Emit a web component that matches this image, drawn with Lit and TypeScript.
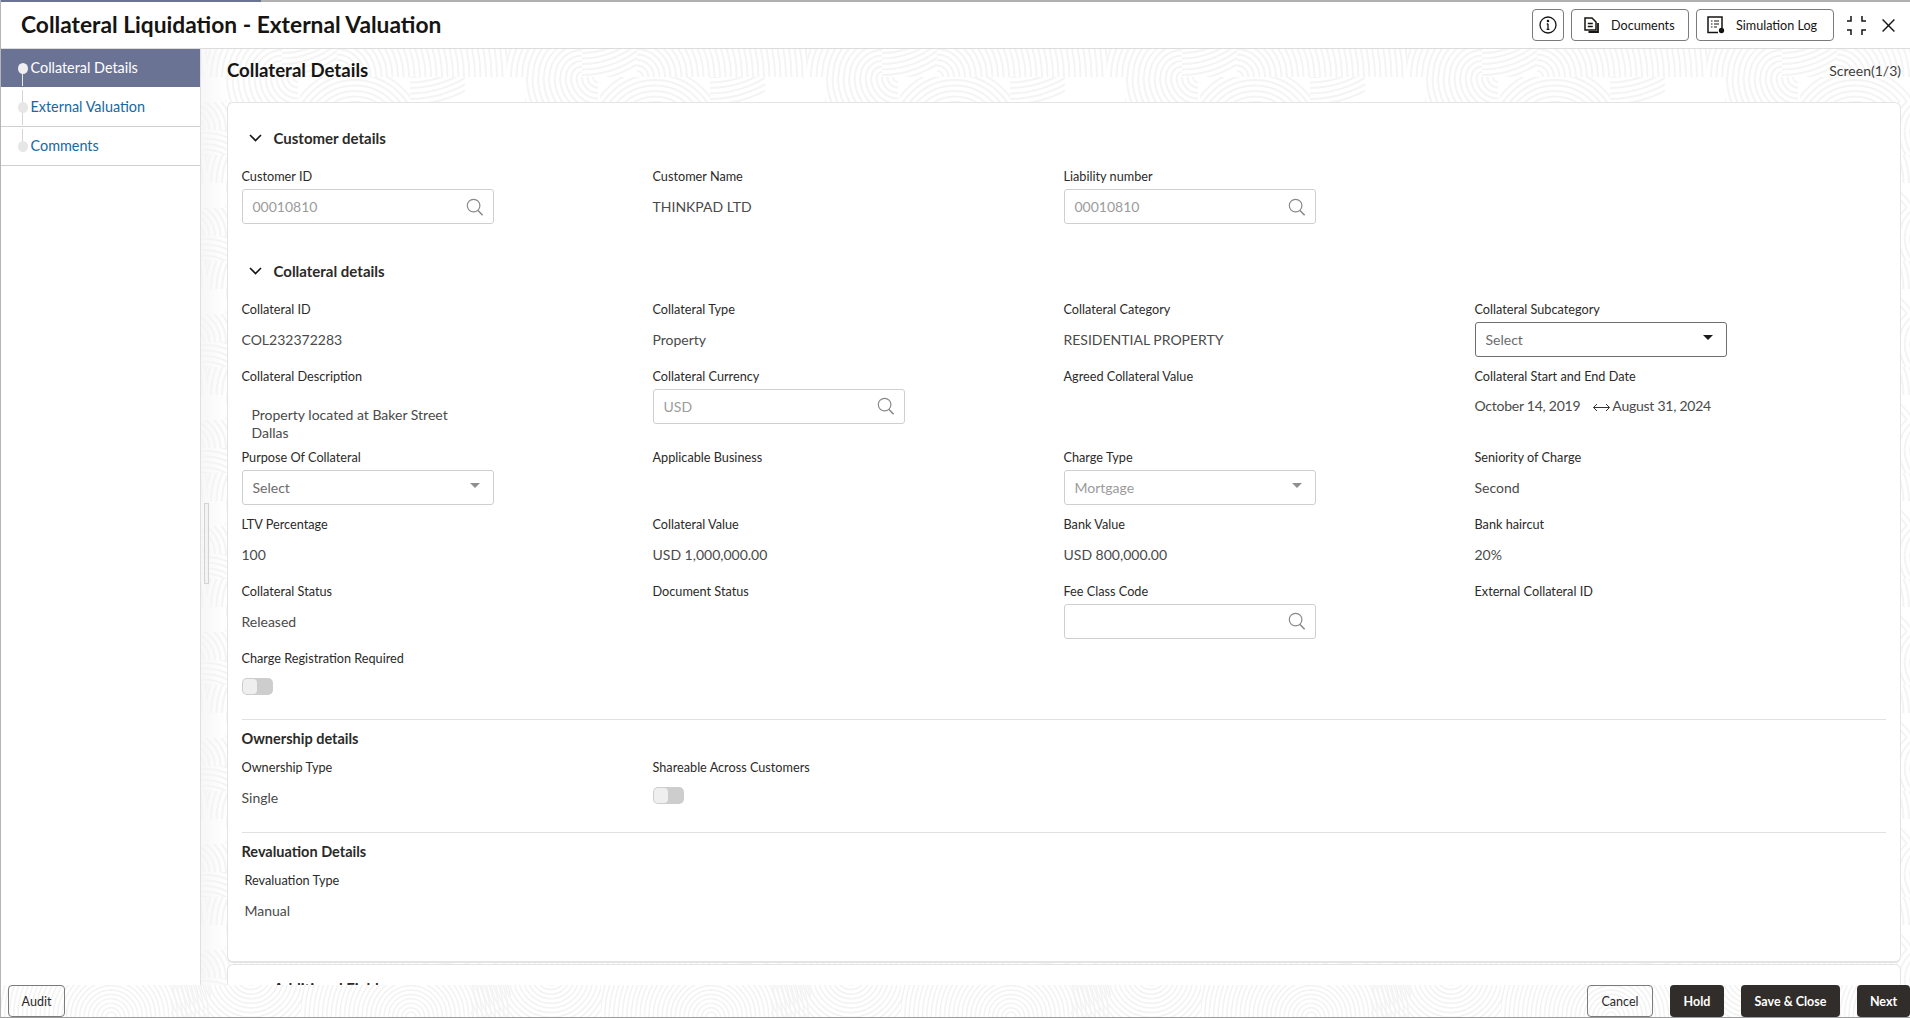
import { LitElement, html, css, svg } from "lit";
import { customElement } from "lit/decorators.js";

// x, y, w, h of the cell, then ring centre in tile coordinates, smallest and largest radius
type Cell = [number, number, number, number, number, number, number, number];

const rows: Cell[] = [
  [0, 0, 55, 28, 0, -70, 74, 104],
  [55, 0, 170, 28, 55, 28, 6, 172],
  [225, 0, 75, 28, 300, 28, 5, 80],
  [243, 28, 57, 25, 316, 28, 5, 80],
  [0, 28, 16, 25, 16, 28, 5, 30],
  [18, 28, 55, 25, 73, 88, 35, 70],
  [73, 28, 55, 25, 73, 88, 35, 70],
  [128, 28, 55, 25, 128, -60, 88, 120],
];

function cellSvg(c: Cell, dx = 0, dy = 0, step = 5.5) {
  const rs: number[] = [];
  for (let r = c[6]; r <= c[7]; r += step) rs.push(r);
  return svg`<svg x=${c[0] + dx} y=${c[1] + dy} width=${c[2]} height=${c[3]}>${rs.map(
    (r) => svg`<circle cx=${c[4] - c[0]} cy=${c[5] - c[1]} r=${r} />`
  )}</svg>`;
}

const mainTile = svg`
  ${rows.map((c) => cellSvg(c))}
  ${rows.map((c) => cellSvg(c, 150, 53))}
  ${rows.map((c) => cellSvg(c, -150, 53))}
`;

const footTile = svg`
  <svg x="0" y="0" width="210" height="32">
    ${Array.from({ length: 26 }, (_, i) => svg`<circle cx="110" cy="32" r=${5 + i * 4.4} />`)}
  </svg>
  <svg x="170" y="0" width="130" height="32">
    ${Array.from({ length: 24 }, (_, i) => svg`<circle cx="80" cy="-10" r=${10 + i * 4.6} />`)}
  </svg>
`;

const searchIcon = html`<svg class="ico" viewBox="0 0 18 18" width="18" height="18" fill="none" stroke="#8a8886" stroke-width="1.2">
  <circle cx="7.6" cy="7.6" r="6.3" /><path d="M12 12.4 16.6 17.2" stroke-width="1.5" />
</svg>`;

@customElement("app-root")
export class AppRoot extends LitElement {
  static styles = css`
    :host {
      display: block;
      height: 1018px;
      font-family: "Lato", "Noto Sans", sans-serif;
      color: #161513;
      background: #fff;
      overflow: hidden;
    }
    .shell {
      height: 1018px;
      box-sizing: border-box;
      display: flex;
      flex-direction: column;
      border-left: 1px solid #b5b5b5;
      border-bottom: 1px solid #9d9d9d;
      position: relative;
    }
    .progress {
      height: 2px;
      flex: none;
      background: linear-gradient(to right, #6b7394 0 260px, #b0b0b0 260px);
    }
    header {
      flex: none;
      height: 46px;
      display: flex;
      align-items: center;
      border-bottom: 1px solid #dcdcdc;
      padding-left: 20px;
      padding-right: 15px;
    }
    h1 {
      margin: 0;
      flex: 1;
      font-size: 22.75px;
      font-weight: 700;
      line-height: 26px;
    }
    .hbtn {
      height: 32px;
      box-sizing: border-box;
      border: 1px solid #7b7b7b;
      border-radius: 4px;
      background: #fff;
      display: flex;
      align-items: center;
      font: inherit;
      font-size: 12.6px;
      color: #161513;
      padding: 0;
      margin-right: 7px;
    }
    .hbtn.info { width: 32px; justify-content: center; }
    .hbtn.docs { width: 118px; padding-left: 12px; gap: 10px; }
    .hbtn.sim { width: 138px; padding-left: 10px; gap: 11px; margin-right: 13px; }
    .hicon { display: block; flex: none; }
    .compress { margin-right: 16px; }
    .body {
      flex: 1;
      min-height: 0;
      display: flex;
    }
    nav {
      flex: none;
      width: 200px;
      box-sizing: border-box;
      border-right: 1px solid #dbe1e8;
      background: #fff;
    }
    .step {
      height: 39px;
      box-sizing: border-box;
      border-bottom: 1px solid #cfcfcf;
      padding-left: 29.5px;
      font-size: 14.4px;
      line-height: 38px;
      color: #17699f;
      position: relative;
    }
    .step.active { background: #6b7394; color: #fff; border-bottom-color: #fff; }
    .step::before {
      content: "";
      position: absolute;
      left: 21px;
      top: 2px;
      bottom: 1px;
      width: 1px;
      background: #d4d4d4;
    }
    .step.active::before { top: 19px; background: #e8e8e8; }
    .step.last::before { bottom: 18px; }
    .step::after {
      content: "";
      position: absolute;
      left: 17px;
      top: 14px;
      width: 10px;
      height: 11px;
      border-radius: 50%;
      background: #e6e6e6;
    }
    .step.active::after { background: #efefef; }
    main {
      flex: 1;
      min-width: 0;
      position: relative;
      overflow: hidden;
      padding: 0 9px 0 26px;
      background: linear-gradient(to right, #f7f7f7, #fff 26px);
    }
    .bg {
      position: absolute;
      inset: 0;
      width: 100%;
      height: 100%;
    }
    .bg circle { fill: none; stroke: #f4f4f4; stroke-width: 2; }
    .bar {
      position: relative;
      height: 53px;
      display: flex;
      align-items: flex-start;
      justify-content: space-between;
      padding-top: 10px;
      box-sizing: border-box;
    }
    h2 {
      margin: 0;
      font-size: 18.6px;
      font-weight: 700;
      line-height: 22px;
    }
    .screen { font-size: 14px; line-height: 23px; color: #3c3c3c; }
    .card {
      position: relative;
      background: #fff;
      border: 1px solid #e4e4e4;
      border-bottom-width: 2px;
      border-radius: 6px;
      box-sizing: border-box;
      height: 861px;
      padding: 20px 14px 0 13.5px;
    }
    .card.more { height: 200px; margin-top: 1px; padding-top: 8px; }
    .card.more svg { margin-top: 8px; }
    .sect {
      display: flex;
      align-items: center;
      gap: 12px;
      height: 30px;
      padding-left: 7px;
      font-size: 15px;
      font-weight: 700;
      color: #2b2a28;
    }
    .grid {
      display: grid;
      grid-template-columns: repeat(4, 411px);
      margin-top: 14px;
    }
    .sect + .grid.c { margin-top: 13.5px; }
    .spacer { height: 22px; }
    .field {
      height: 67px;
      box-sizing: border-box;
    }
    .field.tall { height: 81px; }
    .field.last { height: 70px; }
    .field.own { height: 74px; }
    label {
      display: block;
      height: 18px;
      font-size: 12.7px;
      line-height: 18px;
      color: #2b2a28;
      margin-bottom: 4px;
    }
    .val {
      height: 34px;
      line-height: 36px;
      font-size: 14px;
      color: #4a4a4a;
    }
    .desc {
      padding: 17px 0 0 10px;
      line-height: 18px;
      width: 220px;
      height: 48px;
      box-sizing: border-box;
    }
    .box {
      width: 252px;
      height: 35px;
      box-sizing: border-box;
      border: 1px solid #cfcfcf;
      border-radius: 3px;
      display: flex;
      align-items: center;
      justify-content: space-between;
      padding: 0 10px;
      font-size: 14px;
      color: #9b9b9b;
      background: #fff;
    }
    .box.sel { color: #6c6c6c; }
    .box.dark { border-color: #6f6f6f; }
    .tri {
      width: 0;
      height: 0;
      border-left: 5px solid transparent;
      border-right: 5px solid transparent;
      border-top: 5px solid #8f8f8f;
      margin: -3px 3px 0 0;
    }
    .dark .tri { border-top-color: #1b1b1b; }
    .ico { display: block; flex: none; margin-right: -1px; }
    .dates { display: flex; align-items: center; letter-spacing: -0.25px; }
    .dates svg { margin: 4px 2px 0 13px; }
    .toggle {
      width: 31px;
      height: 17px;
      border-radius: 5px;
      background: #cdcdcd;
      margin-top: 11px;
      position: relative;
    }
    .toggle::after {
      content: "";
      position: absolute;
      left: 1px;
      top: 1px;
      width: 14px;
      height: 15px;
      border-radius: 4px;
      background: #efefef;
    }
    hr {
      border: 0;
      border-top: 1px solid #e0e0e0;
      margin: 0;
    }
    h3 {
      margin: 0;
      font-size: 14.5px;
      font-weight: 700;
      line-height: 18px;
      color: #2b2a28;
    }
    .sub { margin: 10.5px 0 9.5px; }
    .grid.plain { margin-top: 0; }
    .reval { padding-left: 3px; }
    .reval .val { line-height: 35px; }
    .splitter {
      position: absolute;
      left: 3px;
      top: 454px;
      width: 5px;
      height: 81px;
      box-sizing: border-box;
      border: 1px solid #d3d3d3;
      background: #f3f3f3;
    }
    footer {
      flex: none;
      height: 32px;
      position: relative;
      display: flex;
      align-items: stretch;
      background: #fff;
      gap: 17px;
      padding-left: 7px;
    }
    footer .bg circle { stroke: #f3f3f3; stroke-width: 1.6; }
    .fbtn {
      position: relative;
      border-radius: 4px;
      box-sizing: border-box;
      font: inherit;
      font-size: 12.5px;
      padding: 0;
      cursor: default;
    }
    .fbtn.o { border: 1px solid #7b7b7b; background: transparent; color: #2b2a28; }
    .fbtn.d { border: 0; background: #312d2a; color: #fff; font-weight: 700; }
    .grow { flex: 1; }
    .audit { width: 57px; }
    .cancel { width: 66px; }
    .hold { width: 54px; }
    .save { width: 99px; }
    .advance { width: 53px; }
  `;

  private field(label: string, content: unknown, cls = "") {
    return html`<div class="field ${cls}"><label>${label}</label>${content}</div>`;
  }
  private val(t: string) {
    return html`<div class="val">${t}</div>`;
  }
  private search(t: string) {
    return html`<div class="box"><span>${t}</span>${searchIcon}</div>`;
  }
  private select(t: string, cls = "sel") {
    return html`<div class="box ${cls}"><span>${t}</span><i class="tri"></i></div>`;
  }
  private chev() {
    return html`<svg width="13" height="8" viewBox="0 0 13 8" fill="none" stroke="#161513" stroke-width="1.6"><path d="M1 1l5.5 5.5L12 1" /></svg>`;
  }

  render() {
    return html`
      <div class="shell">
        <div class="progress"></div>
        <header>
          <h1>Collateral Liquidation - External Valuation</h1>
          <button class="hbtn info">
            <svg class="hicon" width="18" height="18" viewBox="0 0 18 18" fill="none" stroke="#161513" stroke-width="1.3">
              <circle cx="9" cy="9" r="8" /><path d="M9 8v5.2M7.6 13.4h2.8M7.8 8h1.4" /><circle cx="9" cy="5" r=".6" fill="#161513" />
            </svg>
          </button>
          <button class="hbtn docs">
            <svg class="hicon" width="17" height="17" viewBox="0 0 17 17" fill="none" stroke="#161513" stroke-width="1.5">
              <path d="M1 1h7l4 4v8H1z" /><path d="M3.8 6.5h5M3.8 9.5h5" /><path d="M14 6v9H4.5" stroke-width="1.8" />
            </svg>
            <span>Documents</span>
          </button>
          <button class="hbtn sim">
            <svg class="hicon" width="18" height="18" viewBox="0 0 18 18" fill="none" stroke="#161513" stroke-width="1.5">
              <path d="M11 16.5H1V1h14v11" /><path d="M4 5h1.5M7 5h5M4 8h1.5M7 8h5M4 11h1.5M7 11h3" stroke-width="1.2" />
              <circle cx="14.5" cy="14.5" r="2" fill="#161513" stroke="#161513" stroke-width="1.3" />
            </svg>
            <span>Simulation Log</span>
          </button>
          <svg class="hicon compress" width="19" height="19" viewBox="0 0 19 19" fill="none" stroke="#161513" stroke-width="1.5">
            <path d="M0 5h4V0M15 0v5h4M0 14h4v5M19 14h-4v5" />
          </svg>
          <svg class="hicon" width="13" height="13" viewBox="0 0 13 13" fill="none" stroke="#161513" stroke-width="1.4">
            <path d="M.6.6l11.8 11.8M12.4.6.6 12.4" />
          </svg>
        </header>
        <div class="body">
          <nav>
            <div class="step active">Collateral Details</div>
            <div class="step">External Valuation</div>
            <div class="step last">Comments</div>
          </nav>
          <main>
            <svg class="bg">
              <defs>
                <pattern id="tile" width="300" height="106" patternUnits="userSpaceOnUse" x="81" y="0">${mainTile}</pattern>
              </defs>
              <rect width="100%" height="100%" fill="url(#tile)" />
            </svg>
            <div class="splitter"></div>
            <div class="bar">
              <h2>Collateral Details</h2>
              <span class="screen">Screen(1/3)</span>
            </div>
            <section class="card">
              <div class="sect">${this.chev()}<span>Customer details</span></div>
              <div class="grid">
                ${this.field("Customer ID", this.search("00010810"))}
                ${this.field("Customer Name", this.val("THINKPAD LTD"))}
                ${this.field("Liability number", this.search("00010810"))}
              </div>
              <div class="spacer"></div>
              <div class="sect">${this.chev()}<span>Collateral details</span></div>
              <div class="grid c">
                ${this.field("Collateral ID", this.val("COL232372283"))}
                ${this.field("Collateral Type", this.val("Property"))}
                ${this.field("Collateral Category", this.val("RESIDENTIAL PROPERTY"))}
                ${this.field("Collateral Subcategory", this.select("Select", "sel dark"))}

                ${this.field(
                  "Collateral Description",
                  html`<div class="val desc">Property located at Baker Street Dallas</div>`,
                  "tall"
                )}
                ${this.field("Collateral Currency", this.search("USD"), "tall")}
                ${this.field("Agreed Collateral Value", "", "tall")}
                ${this.field(
                  "Collateral Start and End Date",
                  html`<div class="val dates">
                    <span>October 14, 2019</span>
                    <svg width="17" height="9" viewBox="0 0 17 9" fill="none" stroke="#333" stroke-width="1">
                      <path d="M.5 4.5h16M4 1 .5 4.5 4 8M13 1l3.5 3.5L13 8" />
                    </svg>
                    <span>August 31, 2024</span>
                  </div>`,
                  "tall"
                )}

                ${this.field("Purpose Of Collateral", this.select("Select"))}
                ${this.field("Applicable Business", "")}
                ${this.field("Charge Type", this.select("Mortgage", ""))}
                ${this.field("Seniority of Charge", this.val("Second"))}

                ${this.field("LTV Percentage", this.val("100"))}
                ${this.field("Collateral Value", this.val("USD 1,000,000.00"))}
                ${this.field("Bank Value", this.val("USD 800,000.00"))}
                ${this.field("Bank haircut", this.val("20%"))}

                ${this.field("Collateral Status", this.val("Released"))}
                ${this.field("Document Status", "")}
                ${this.field("Fee Class Code", this.search(""))}
                ${this.field("External Collateral ID", "")}

                ${this.field("Charge Registration Required", html`<div class="toggle"></div>`, "last")}
              </div>
              <hr />
              <h3 class="sub">Ownership details</h3>
              <div class="grid plain">
                ${this.field("Ownership Type", this.val("Single"), "own")}
                ${this.field("Shareable Across Customers", html`<div class="toggle"></div>`, "own")}
              </div>
              <hr />
              <h3 class="sub">Revaluation Details</h3>
              <div class="grid plain reval">
                ${this.field("Revaluation Type", this.val("Manual"))}
              </div>
            </section>
            <section class="card more">
              <div class="sect">${this.chev()}<span>Additional Fields</span></div>
            </section>
          </main>
        </div>
        <footer>
          <svg class="bg">
            <defs>
              <pattern id="ftile" width="300" height="32" patternUnits="userSpaceOnUse" x="0" y="0">${footTile}</pattern>
            </defs>
            <rect width="100%" height="100%" fill="url(#ftile)" />
          </svg>
          <button class="fbtn o audit">Audit</button>
          <div class="grow"></div>
          <button class="fbtn o cancel">Cancel</button>
          <button class="fbtn d hold">Hold</button>
          <button class="fbtn d save">Save &amp; Close</button>
          <button class="fbtn d advance">Next</button>
        </footer>
      </div>
    `;
  }
}
